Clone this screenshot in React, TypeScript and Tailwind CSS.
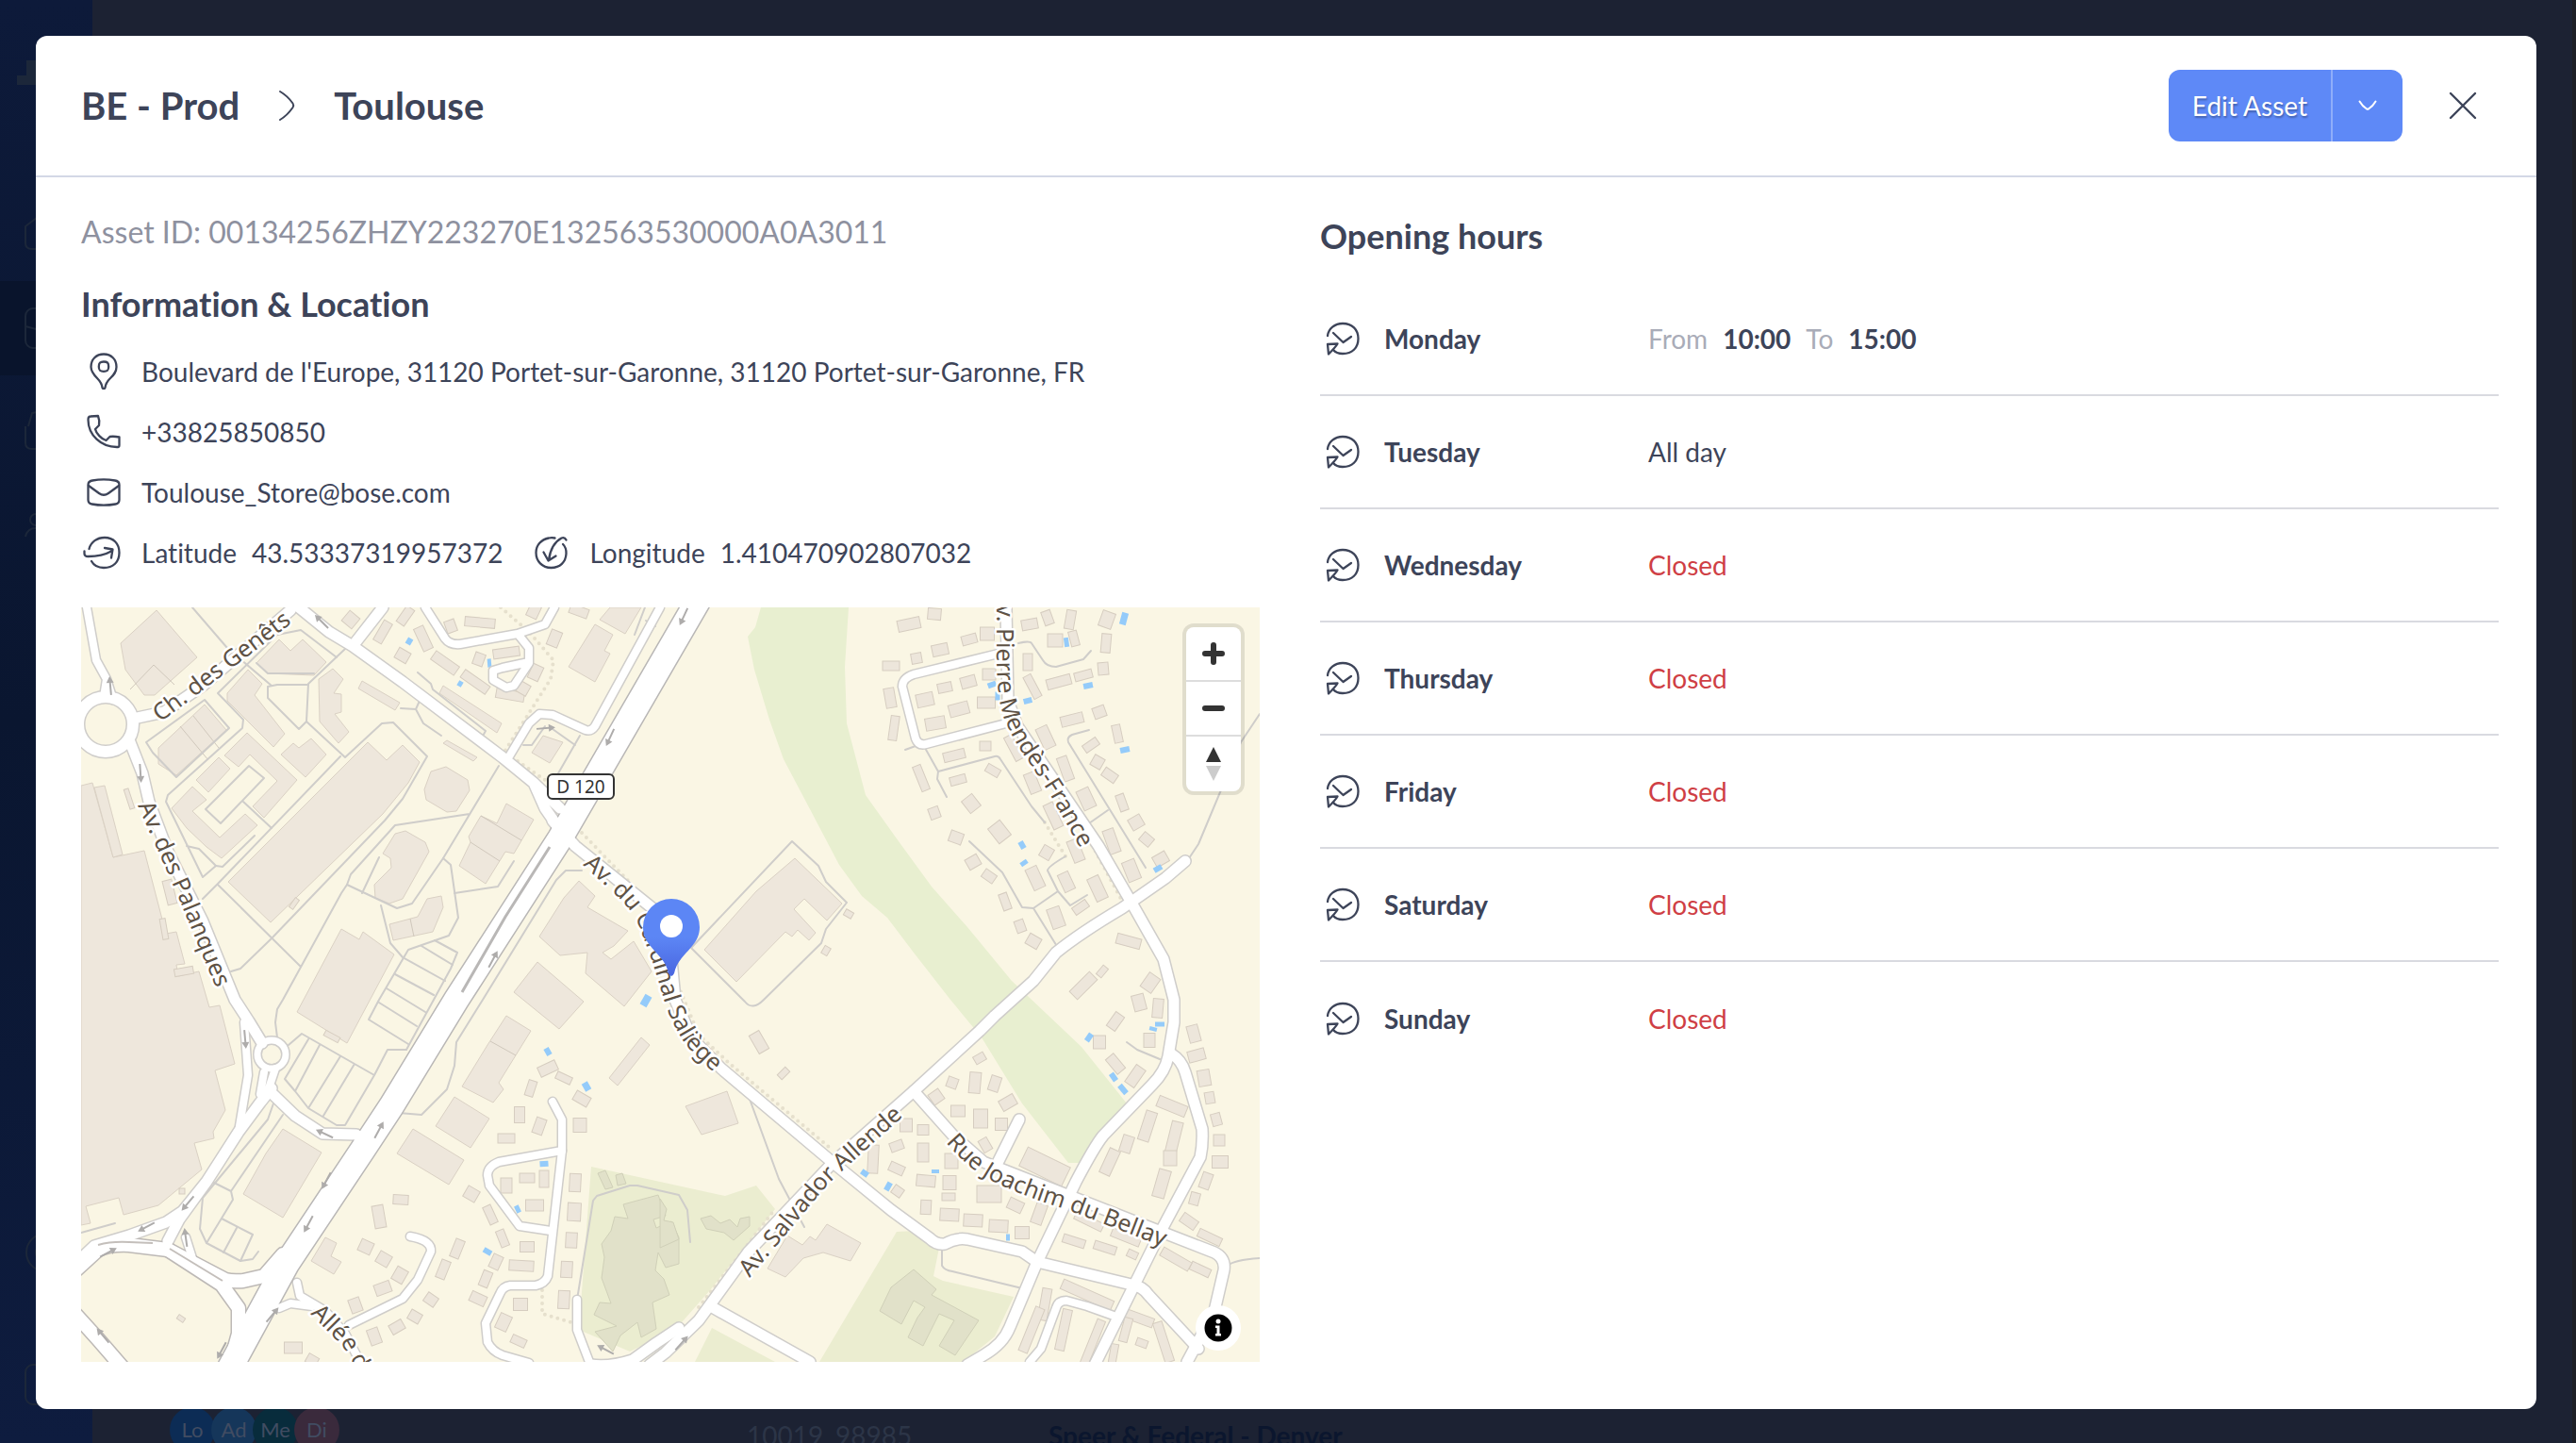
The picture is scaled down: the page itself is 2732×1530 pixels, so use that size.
import type { ReactNode } from 'react'

type Block = [x: number, y: number, w: number, h: number, angle?: number]

const openingHours = [
  { day: 'Monday', from: '10:00', to: '15:00' },
  { day: 'Tuesday', allDay: true },
  { day: 'Wednesday' },
  { day: 'Thursday' },
  { day: 'Friday' },
  { day: 'Saturday' },
  { day: 'Sunday' },
]

const avatars = [
  { initials: 'Lo', color: 'bg-[#0c2c55]' },
  { initials: 'Ad', color: 'bg-[#15365a]' },
  { initials: 'Me', color: 'bg-[#082c3c]' },
  { initials: 'Di', color: 'bg-[#3a2a3c]' },
]

const parks = [
  'M721 0L715 21L707 31L714 66L730 119L745 161L773 214L804 273L828 306L855 329L883 366L922 416L955 456L998 526L1047 589H1058L1109 526L1061 466L987 396L940 339L902 296L867 248L832 199L812 123L810 63L814 0Z',
]

const campuses = [
  'M541 593L614 609L683 624L716 613L736 638L667 724L630 766L582 789L528 766Z',
  'M865 662L885 661L910 679L904 709L914 714L989 731L969 773L936 800H783Z',
  'M669 764L736 800H651Z',
]

const campusBuildings = [
  'M575 633L612 623L620 645L607 649L610 658L626 651L634 668V696L620 700L612 684L609 703L618 712L624 729L606 737L610 765L594 774L590 758L572 772L564 789L545 768L568 762L544 750L550 737L562 738L552 711L555 689L552 675L562 661L566 646L580 648Z',
  'M548 600L556 597L564 615L556 617Z',
  'M567 602L574 600L578 611L569 613Z',
  'M614 627L621 638L618 650L628 652L634 670L614 679Z',
  'M657 648L668 645L678 653L688 649L696 657L699 648L709 646L709 656L692 671L682 663L663 659Z',
  'M883 702L907 723L902 729L952 756L927 793L910 783L926 756L910 749L893 783L877 774L887 753L895 742L883 735L870 760L847 746L859 721Z',
]

const buildings = [
  'M0 189L12 186L34 265L67 258L90 346L101 344L110 378L101 379L103 391L125 386L136 424L147 422L163 484L142 491L153 533L140 556L141 563L120 568L128 596L82 634L45 644L40 626L5 635L10 653L0 655Z',
  'M14 191L25 189L44 262L34 265Z',
  'M304 143L324 162L341 146L359 164L347 186L320 219L201 334L156 291Z',
  'M80 3L123 53L78 93L67 93L47 66L42 38Z',
  'M210 34L222 46L235 34L260 58L247 72L198 70L186 59Z',
  'M177 66L192 81L184 93L216 134L204 148L155 99V91Z',
  'M267 65L278 76L268 91L276 92V111L269 113L284 132L273 144L253 121L252 76Z',
  'M131 103L154 130L101 178L82 166V149Z',
  'M298 78L338 101L333 109L294 86Z',
  'M176 133L229 183L194 223L182 211L208 184L179 156L167 169L152 157Z',
  'M146 159L158 171L135 196L122 183Z',
  'M118 190L133 204L118 216L147 244L174 219L187 231L149 266L133 254L112 234L96 213Z',
  'M244 139L260 156L238 180L212 156L225 144L231 149Z',
  'M387 169L410 183L412 194L398 216L388 217L366 204L364 193L371 174Z',
  'M344 237L365 249L369 259L341 309L327 314L312 308L311 294L329 276L328 266L320 261L333 240Z',
  'M451 208L480 225L459 261L450 259L429 293L401 274L413 249L411 243L424 221L441 229Z',
  'M382 306L384 318L373 344L331 353L327 336L357 328L367 309Z',
  'M276 341L295 352L299 344L332 368L282 462L229 429Z',
  'M384 83L446 123L441 133L380 91Z',
  'M388 141L420 159L416 163L384 144Z',
  'M490 136L511 143L497 165L478 154Z',
  'M545 18L564 29L555 46L561 49L545 79L517 63Z',
  'M561 0H594L577 28L550 13Z',
  'M528 290L545 306L537 318L580 343L565 359L553 366L562 373L586 354L605 386L576 423L535 388L537 366L508 369L486 349L512 308Z',
  'M484 376L533 418L507 447L459 408Z',
  'M451 433L477 449L443 504L448 511L437 525L404 508L431 464Z',
  'M396 519L433 542L413 573L376 550Z',
  'M352 553L406 586L390 612L335 579Z',
  'M214 553L255 578L214 647L172 622L196 579Z',
  'M259 668L271 674L265 688L276 694L268 707L244 693Z',
  'M594 456L603 464L569 507L560 499Z',
  'M757 266L807 314L791 332L767 309L756 320L779 345L772 353L760 342L754 349L747 344L695 397L661 363L716 301Z',
  'M641 529L685 513L697 547L658 559Z',
  'M791 654L827 674L816 693L787 684L766 690L747 710L728 701L749 666L765 676L773 667L779 671Z',
]

const houses: Block[] = [
  [878, 18, 24, 12, -12], [905, 7, 14, 12, 5], [859, 62, 18, 10], [886, 54, 11, 11, -10], [911, 45, 17, 12, -12],
  [942, 34, 16, 10, -15], [961, 28, 15, 14], [858, 96, 11, 21, -10], [895, 98, 18, 14, -12], [916, 85, 15, 10, -12],
  [941, 79, 16, 12, -15], [963, 71, 14, 12], [931, 108, 21, 13, -15], [906, 123, 21, 13, -10], [960, 101, 19, 12],
  [862, 128, 9, 26, 8], [926, 157, 23, 10, -14], [959, 147, 12, 10], [891, 181, 9, 28, -22], [930, 183, 17, 9, -15],
  [967, 173, 15, 9, 30], [944, 208, 14, 16, -38], [974, 238, 16, 20, -38], [905, 218, 11, 12, -20], [928, 244, 14, 12, 20],
  [946, 270, 14, 12, -30], [963, 285, 14, 10, 35], [980, 312, 9, 18, -20], [996, 338, 10, 13, -20], [1010, 354, 14, 12, 30],
  [1006, 18, 17, 11, -10], [1025, 11, 10, 15, -20], [1049, 13, 10, 20, 10], [1033, 35, 16, 14], [1088, 13, 14, 17, 20],
  [1053, 33, 9, 16, -15], [1087, 38, 10, 20, 5], [1004, 58, 10, 18], [1009, 84, 9, 26, -28], [1037, 79, 26, 11, -15],
  [1063, 72, 19, 9, -15], [1084, 65, 11, 13, -5], [1051, 119, 24, 11, -14], [1080, 111, 13, 12, -20], [1099, 134, 9, 19, -12],
  [1023, 138, 13, 24, -25], [989, 149, 9, 28, -28], [1071, 146, 17, 9, -35], [1078, 164, 12, 12, 30], [1091, 178, 16, 10, 35],
  [1044, 171, 11, 26, -20], [1009, 186, 12, 22, -22], [1066, 203, 14, 22, -25], [1031, 221, 11, 28, -25], [1104, 207, 9, 18, -20],
  [1119, 228, 14, 13, -30], [1130, 246, 13, 11, 40], [1093, 248, 12, 26, -20], [1055, 258, 12, 24, -22], [1024, 260, 12, 13, 30],
  [1114, 279, 14, 22, -22], [1145, 267, 15, 12, -30], [1012, 287, 13, 24, -25], [1045, 291, 12, 20, -25], [1078, 298, 13, 26, -25],
  [1060, 318, 17, 9, -35], [1034, 329, 14, 22, -20], [1111, 354, 26, 11, 15], [1134, 398, 14, 18, 35], [1063, 401, 12, 30, 45],
  [1083, 386, 12, 7, -50], [814, 325, 9, 7, 30], [790, 364, 7, 9, 30], [1122, 419, 13, 17, -15], [1142, 425, 11, 20, 5],
  [1097, 439, 11, 18, 35], [1080, 461, 13, 14], [1133, 459, 12, 15], [1180, 452, 12, 18, -15], [1183, 475, 18, 12, -15],
  [1097, 484, 11, 20, -40], [1118, 497, 12, 22, 35], [1191, 499, 13, 17, -10], [1197, 520, 10, 12, -10], [1204, 543, 10, 13, -15],
  [1207, 565, 12, 12], [1208, 588, 17, 13], [1193, 608, 11, 17, 20], [1181, 627, 10, 13, 15], [1175, 651, 18, 11, 35],
  [1197, 668, 26, 9, 25], [1187, 702, 22, 9, 25], [1161, 691, 34, 10, 30], [1157, 529, 32, 12, 22], [1131, 550, 12, 32, 18],
  [1109, 569, 12, 18, 18], [1091, 588, 12, 28, 25], [1159, 563, 12, 36, 14], [1155, 584, 14, 16], [1146, 611, 13, 30, 16],
  [1022, 593, 50, 22, 26], [924, 504, 11, 11, 20], [907, 519, 13, 13, -35], [948, 504, 12, 22, 5], [969, 505, 11, 16, 18],
  [953, 478, 12, 9, -30], [983, 525, 17, 12, -30], [930, 534, 15, 12], [954, 542, 15, 20], [976, 548, 13, 13],
  [959, 570, 10, 14, -30], [875, 549, 13, 14], [893, 554, 12, 11], [865, 571, 14, 10, -20], [840, 585, 11, 30, 3],
  [893, 578, 12, 20], [923, 587, 14, 16], [865, 595, 16, 10, 25], [896, 608, 20, 12, 5], [921, 610, 14, 15],
  [866, 619, 11, 10, 35], [963, 622, 26, 18], [920, 625, 14, 8], [896, 636, 11, 15, 3], [921, 644, 20, 13, 3],
  [946, 650, 20, 13, 3], [973, 656, 20, 13, 3], [998, 663, 15, 13], [991, 634, 16, 12, 25], [1016, 643, 12, 22, 20],
  [1069, 651, 32, 9, 26], [1108, 668, 32, 9, 22], [1053, 672, 24, 9, 18], [1086, 679, 24, 9, 18], [1115, 686, 11, 8, 25],
  [1067, 729, 58, 11, 24], [1022, 739, 10, 34, 10], [1008, 766, 10, 50, 22], [1042, 766, 10, 44, 12], [1073, 779, 9, 50, 22],
  [1120, 753, 36, 10, 20], [1108, 766, 9, 26, 15], [1148, 779, 10, 44, -18], [1125, 780, 12, 8, 20], [1095, 791, 8, 20, 10],
  [719, 461, 12, 22, -30], [745, 494, 12, 7, -45], [495, 489, 20, 11, -25], [512, 499, 17, 8, 25], [477, 510, 9, 17, 18],
  [465, 538, 11, 17], [486, 550, 11, 17, 20], [451, 563, 18, 10], [531, 521, 17, 11, 30], [529, 549, 14, 15],
  [414, 622, 14, 13, 30], [451, 613, 12, 16], [473, 605, 16, 10], [491, 606, 10, 18], [481, 634, 19, 12],
  [524, 610, 12, 19, 3], [523, 641, 14, 19, 3], [520, 671, 12, 16, 3], [515, 702, 12, 17, 3], [512, 734, 12, 19, 3],
  [466, 739, 15, 13], [448, 758, 13, 17, 25], [464, 778, 16, 9, 25], [434, 644, 9, 20, -25], [447, 669, 9, 18, -22],
  [440, 694, 11, 15, 25], [429, 712, 10, 17, 22], [421, 733, 17, 11, 25], [473, 678, 15, 11], [467, 698, 26, 11, 3],
  [339, 628, 16, 10, 3], [399, 680, 10, 20, 22], [384, 702, 10, 20, 22], [371, 734, 13, 11, 35], [354, 752, 13, 11, 30],
  [335, 763, 15, 11, -30], [311, 773, 12, 17, -20], [291, 740, 12, 15, -20], [338, 708, 13, 15, 30], [320, 722, 17, 12, -20],
  [321, 691, 14, 13, 30], [302, 678, 14, 13, 25], [225, 785, 19, 12], [245, 798, 12, 10, 30], [316, 646, 12, 24, -10],
  [286, 13, 14, 14, 40], [320, 26, 10, 24, 30], [344, 9, 10, 20, 35], [363, 33, 11, 26, -25], [341, 51, 14, 12, 30],
  [386, 59, 30, 11, 35], [423, 16, 32, 10, 5], [392, 20, 11, 13, -20], [451, 48, 28, 10, -8], [422, 55, 11, 13, 20],
  [418, 79, 32, 10, 35], [455, 93, 30, 10, 10], [482, 69, 12, 16, 25], [502, 33, 12, 17, 22], [528, 4, 20, 10, 20],
  [480, 4, 12, 14, 25], [469, 86, 12, 12, 30], [51, 203, 5, 22, -18], [94, 302, 10, 26, -14], [266, 455, 17, 6, 28],
  [226, 314, 5, 12, 35], [88, 341, 6, 22, -10], [109, 386, 20, 8, -10], [107, 619, 6, 6], [106, 754, 8, 5, 35],
]

const pools: Block[] = [
  [348, 36, 6, 7, 30], [433, 59, 4, 9, -5], [402, 81, 5, 6, 30], [599, 417, 8, 12, 30], [495, 471, 6, 8, -30],
  [536, 508, 7, 9, -30], [491, 590, 9, 6, -4], [463, 638, 5, 8, -25], [431, 683, 9, 6, 30], [1106, 12, 7, 13, 15],
  [1045, 37, 5, 10, -8], [966, 82, 9, 6, -20], [972, 94, 5, 9], [1004, 99, 9, 6, -15], [1068, 83, 10, 6, -12],
  [1107, 151, 10, 6, -12], [998, 252, 6, 8, -30], [1000, 271, 8, 5, -35], [1142, 277, 9, 6, -30], [1144, 442, 10, 5],
  [1137, 447, 8, 4, 15], [1069, 456, 6, 9, 35], [1095, 498, 6, 9, -35], [1105, 511, 6, 11, -40], [831, 600, 8, 6, 35],
  [856, 614, 6, 9, 30], [906, 598, 8, 4], [983, 668, 4, 7],
]

const lanes = [
  'M118 0L155 43L202 83',
  'M271 53L233 24L208 29L145 91L172 119L171 128L92 199L90 206L129 286L143 274L125 256L112 253',
  'M143 274L150 275L184 242',
  'M280 44L241 81L239 121L280 159L319 123L331 122L367 158L341 203L322 226L202 351L169 383L159 386',
  'M275 158L145 293L129 309M145 294L233 381',
  'M239 121L231 129L198 96V84L208 82H241',
  'M178 168L194 181L148 229L132 214ZM172 206L202 234',
  'M69 143L131 98L157 128L101 180L76 154Z',
  'M186 59L198 70H247',
  'M443 168L384 266L351 314L335 319L282 294L286 283L333 231L412 219M298 303L316 265',
  'M282 294L276 303L214 416L208 426L206 440L208 456',
  'M384 266L392 273L400 329L390 348L347 363L316 416L305 437L347 463',
  'M318 316L328 356L341 371L386 396M396 303L442 296L459 269',
  'M339 107L355 108L363 123L382 136M359 99L355 108',
  'M357 69L371 81L373 87L429 131L425 138',
  'M333 389L374 411M361 359L394 379M375 353L399 366L392 383L345 469M324 404L365 429M316 419L356 444',
  'M345 469H325L311 496L280 549H271L241 531L227 513L216 500L241 458M220 464L234 452L311 496M253 464L227 513M275 476L241 531M290 484L257 539',
  'M204 526L198 543L129 626L126 659L133 674L169 693L182 691L188 683',
  'M214 538L159 619L161 628L133 674M139 609L159 619M149 648L182 665L169 693M165 658L151 684',
  'M531 279H514L504 289L426 416L398 461L396 486L388 511L361 538L337 536',
  'M529 136L506 176M500 129L524 146M469 146H478L492 126',
  'M598 0L587 29M599 14L609 20',
  'M647 361L754 248L782 274L790 291L812 313L790 341L785 356L724 416Q712 428 704 418Z',
  'M874 151L885 147M895 149L909 174L969 158Q973 157 975 161L1008 211L1022 228M909 174L908 182L918 201',
  'M994 38Q1006 35 1008 38L1020 56Q1024 63 1034 63L1063 55L1071 46',
  'M1069 130L1051 135Q1045 138 1047 143L1129 276M1089 215L1069 229',
  'M942 248L977 281L998 318L1010 319L1036 361M1010 319L1036 301L1025 279Q1025 275 1044 264M1036 301L1049 316L1067 305',
  'M1175 266L1185 251L1208 196L1230 143L1250 113',
  'M706 513L740 606L767 657M1109 461L1120 469L1144 479',
  'M913 679V698Q916 703 924 704L998 722M1216 698Q1222 692 1250 690',
  'M526 734L543 629L547 624L582 613H590L634 623L643 639L646 673',
  'M0 663L36 653',
]

const footpaths = [
  'M445 0L475 26L501 56L498 76L449 153',
  'M463 163L492 183',
  'M531 239L586 296L612 330L634 403L655 453L687 483L794 573',
  'M489 724V749L520 758',
  'M1069 246L1104 311',
  'M1022 228L1044 264',
  'M655 742L736 638',
]

const smallRoads = [
  'M365 0L386 33Q391 40 402 39L463 28L492 18L502 0M463 28L475 43V59L459 83L451 85L437 77V67L447 64L475 58',
  'M614 0L545 126Q541 132 535 130L500 114L486 113L475 123L451 163',
  'M6 0L16 56L27 76L24 95M27 76L34 98',
  'M173 440L177 496L167 556M194 493L190 516M206 489L198 513',
  'M284 761L341 733L357 713L371 683Q372 671 349 667',
  'M500 524L510 543V576L495 709Q492 717 482 719L455 719Q447 720 444 728L429 759L431 779Q436 789 447 793L475 801',
  'M510 576L443 588Q431 593 431 602L433 613L465 656L498 661',
  'M526 734V766L539 800',
  'M977 48L883 71Q871 75 871 84L885 139Q888 147 896 145L981 123',
  'M1095 751L1067 741L1045 735Q1036 735 1034 743L1018 786L1006 800',
  'M229 716L232 730L259 746L280 770L296 800M210 743L222 738L245 741M111 668L118 690',
]

const roads = [
  'M55 118L88 111L129 83L222 3L226 -4',
  'M231 0L263 26L288 41L341 79L447 159L480 186L492 213L508 236M480 186L508 213M320 0L288 41',
  'M52 143L65 176L72 206L92 259L129 333L163 416L178 439L192 462',
  'M202 510L190 525L167 556L133 609L104 649L92 672M133 609L108 640L90 652L51 666L14 677L-6 696',
  'M200 513L227 539L256 558L292 559',
  'M671 743L773 800',
  'M500 226L524 253L565 286L606 319L626 373L630 416L647 456L679 489L794 586L859 639L900 669Q907 676 916 675Q928 668 940 670L998 683L1014 694L1114 718Q1126 720 1132 729L1185 786',
  'M883 513L924 559L957 588L1046 623L1148 663L1202 684Q1214 690 1212 703L1202 746L1173 800',
  'M995 543L971 591',
  'M981 0L983 99L993 126L1079 253L1114 313L1148 373L1159 416V440L1153 476Q1150 492 1136 506L1084 560Q1075 571 1055 609L1014 694L985 763Q978 781 957 793L940 803',
  'M1157 474Q1167 480 1171 493L1189 553Q1190 569 1187 583L1148 656L1075 803',
  'M603 803L620 790L655 756L708 683L798 588L883 513L953 449L969 433L1010 396L1034 366Q1060 345 1104 319L1150 287L1171 269',
  'M540 803Q560 806 585 798L610 780L634 764',
]

const highways = [
  'M-6 703L18 681Q30 675 51 676L92 681L153 713Q160 715 172 714L194 709L214 686',
  'M92 681L149 718L167 743V770L157 806',
  'M-10 745L18 776L44 806',
]

const arrows: [number, number, number][] = [
  [31, 83, -95], [63, 176, 86], [255, 15, 225], [493, 128, -5], [561, 138, 115], [437, 373, -62], [174, 458, 85],
  [258, 558, 205], [316, 554, -62], [260, 608, 118], [241, 654, 118], [113, 632, 130], [69, 657, 152], [29, 684, -28],
  [111, 668, -98], [203, 750, -50], [23, 772, 230], [149, 788, 118], [556, 787, 208], [637, 780, -48], [639, 10, 115],
]

const streets = [
  { id: 'genets', name: 'Ch. des Genêts', d: 'M84 122L240 4' },
  { id: 'palanques', name: 'Av. des Palanques', d: 'M60 210L81 257L100 300L150 420' },
  { id: 'saliege', name: 'Av. du Cardinal Saliège', d: 'M532 273L565 303Q584 320 592 338L606 376L617 412Q624 437 640 462Q650 475 690 510' },
  { id: 'mendes', name: 'Av. Pierre Mendès-France', d: 'M971 -19V50Q971 98 980 120Q990 144 1008 168L1026 196L1076 284' },
  { id: 'allende', name: 'Av. Salvador Allende', d: 'M709 711L790 614L808 597L896 518' },
  { id: 'bellay', name: 'Rue Joachim du Bellay', d: 'M917 567Q940 594 962 606Q1000 625 1044 638L1166 685' },
  { id: 'allee', name: 'Allée d', d: 'M243 749L278 784L310 840' },
]

function Blocks({ items, className }: { items: Block[]; className: string }) {
  return (
    <g className={className}>
      {items.map(([x, y, w, h, angle = 0]) => (
        <rect
          key={`${x}-${y}`}
          x={x - w / 2}
          y={y - h / 2}
          width={w}
          height={h}
          transform={`rotate(${angle} ${x} ${y})`}
        />
      ))}
    </g>
  )
}

function Lines({ items, stroke, width }: { items: string[]; stroke: string; width: number }) {
  return (
    <g fill="none" stroke={stroke} strokeWidth={width} strokeLinecap="round" strokeLinejoin="round">
      {items.map((d) => (
        <path key={d} d={d} />
      ))}
    </g>
  )
}

function StreetMap() {
  return (
    <svg
      className="block h-full w-full bg-[#faf6e4]"
      viewBox="0 0 1250 800"
      preserveAspectRatio="xMidYMid slice"
      role="img"
      aria-label="Map"
    >
      <defs>
        <linearGradient id="pin" x1="0" y1="0" x2="0" y2="1">
          <stop offset="0.5" stopColor="#5c86f5" />
          <stop offset="1" stopColor="#4a66e0" />
        </linearGradient>
        {streets.map((s) => (
          <path key={s.id} id={s.id} d={s.d} />
        ))}
      </defs>

      <path d={parks[0]} fill="#e8efd0" />
      <g fill="#ebedd0">
        {campuses.map((d) => (
          <path key={d} d={d} />
        ))}
      </g>
      <g fill="#e1e1c9" stroke="#d0d0b8">
        {campusBuildings.map((d) => (
          <path key={d} d={d} />
        ))}
      </g>
      <g fill="#eee7dc" stroke="#dad1c4">
        {buildings.map((d) => (
          <path key={d} d={d} />
        ))}
      </g>
      <path
        d="M52 87L77 61L99 82M105 126L135 162M119 115L146 149M413 249L444 269M424 221L467 247M349 330L353 349M434 460L461 475"
        fill="none"
        stroke="#d0c8bc"
      />
      <Blocks items={houses} className="fill-[#ede6db] stroke-[#d6cdc0]" />
      <Blocks items={pools} className="fill-[#94cbfa]" />

      <g fill="none" stroke="#e6e0cd" strokeWidth="4" strokeDasharray="0 7" strokeLinecap="round">
        {footpaths.map((d) => (
          <path key={d} d={d} />
        ))}
      </g>
      <Lines items={lanes} stroke="#cfcdca" width={2} />

      {/* casings first so that junctions stay open */}
      <Lines items={smallRoads} stroke="#cfcdca" width={11} />
      <Lines items={roads} stroke="#cfcdca" width={14} />
      <Lines items={highways} stroke="#bdb9b6" width={17} />
      <path d="M656 -10L508 245L398 416L329 529L298 576L218 696L157 808" fill="none" stroke="#b9b7b6" strokeWidth="29" />
      <g fill="none" stroke="#cfcdca">
        <circle cx="26" cy="124" r="29" strokeWidth="15" />
        <circle cx="202" cy="474" r="15" strokeWidth="10" />
      </g>
      <Lines items={smallRoads} stroke="#fff" width={8} />
      <Lines items={roads} stroke="#fff" width={11} />
      <Lines items={highways} stroke="#fff" width={14} />
      <path d="M656 -10L508 245L398 416L329 529L298 576L218 696L157 808" fill="none" stroke="#fff" strokeWidth="26" />
      <g fill="none" stroke="#fff">
        <circle cx="26" cy="124" r="29" strokeWidth="12" />
        <circle cx="202" cy="474" r="15" strokeWidth="7" />
      </g>
      <path d="M497 254L450 328L404 408" fill="none" stroke="#b9b7b6" strokeWidth="3" />
      <path d="M18 676Q32 672 51 673L76 674M94 680L150 714" fill="none" stroke="#c4bfbb" strokeWidth="2" />

      <g fill="none" stroke="#aeacab" strokeWidth="2">
        {arrows.map(([x, y, angle]) => (
          <g key={`${x}-${y}`} transform={`translate(${x} ${y}) rotate(${angle})`}>
            <path d="M-10 0H6" />
            <path d="M3 -4L10 0L3 4Z" fill="#aeacab" stroke="none" />
          </g>
        ))}
      </g>

      <g
        className="[font-family:'Noto_Sans',sans-serif]"
        fontSize="25"
        fill="#5e5245"
        stroke="#fff"
        strokeWidth="5"
        strokeLinejoin="round"
        paintOrder="stroke"
      >
        {streets.map((s) => (
          <text key={s.id}>
            <textPath href={`#${s.id}`}>{s.name}</textPath>
          </text>
        ))}
      </g>

      <rect x="495" y="177" width="70" height="26" rx="5" fill="#fff" stroke="#333" strokeWidth="2" />
      <text
        x="530"
        y="197"
        textAnchor="middle"
        fontSize="19"
        fill="#333"
        className="[font-family:'Noto_Sans',sans-serif]"
      >
        D 120
      </text>

      <path
        d="M626 309A30 30 0 0 0 596 339C596 361 619 367 623 388Q626 394 629 388C633 367 656 361 656 339A30 30 0 0 0 626 309Z"
        fill="url(#pin)"
      />
      <circle cx="626" cy="338" r="12" fill="#fff" />
    </svg>
  )
}

function MapControls() {
  const button = 'flex h-[58px] w-[58px] items-center justify-center'
  return (
    <div className="absolute top-[21px] right-5 divide-y-2 divide-[#ddd] rounded-lg bg-white ring-4 ring-black/10">
      <button type="button" aria-label="Zoom in" className={button}>
        <svg className="h-6 w-6" viewBox="0 0 24 24" stroke="#333" strokeWidth="6" strokeLinecap="round">
          <path d="M3 12h18M12 3v18" />
        </svg>
      </button>
      <button type="button" aria-label="Zoom out" className={button}>
        <svg className="h-6 w-6" viewBox="0 0 24 24" stroke="#333" strokeWidth="6" strokeLinecap="round">
          <path d="M3 12h18" />
        </svg>
      </button>
      <button type="button" aria-label="Reset bearing to north" className={button}>
        <svg className="h-9 w-4" viewBox="0 0 16 36">
          <path d="M0 16L8 0L16 16Z" fill="#333" />
          <path d="M0 20L8 36L16 20Z" fill="#ccc" />
        </svg>
      </button>
    </div>
  )
}

function Icon({ children }: { children: ReactNode }) {
  return (
    <svg
      className="h-12 w-12 shrink-0"
      viewBox="0 0 48 48"
      fill="none"
      stroke="currentColor"
      strokeWidth="2.300"
      strokeLinecap="round"
      strokeLinejoin="round"
    >
      {children}
    </svg>
  )
}

function PinIcon() {
  return (
    <Icon>
      <path d="M24 5.500C16 5.500 10.500 11 10.500 19C10.500 24 14 28 17.500 31.500C21 35 22 37 22.500 41C22.700 42.500 25.300 42.500 25.500 41C26 37 27 35 30.500 31.500C34 28 37.500 25 37.500 19C37.500 11 32 5.500 24 5.500Z" />
      <path d="M24 13.500C20 13.500 18.800 14.800 18.800 18.700C18.800 22.600 20 23.800 24 23.800C28 23.800 29.200 22.600 29.200 18.700C29.200 14.800 28 13.500 24 13.500Z" />
    </Icon>
  )
}

function PhoneIcon() {
  return (
    <Icon>
      <path d="M10 7.500L18 7C19 9.500 19.500 14 19 17L15 21C16 25.500 21.500 31.500 26.500 33L30.500 29C33.500 28.500 38 29 40.500 29.500V38C40.500 39 40 40 39 40C21 40.500 7.500 27 7.500 11C7.500 9 8.500 7.500 10 7.500Z" />
    </Icon>
  )
}

function MailIcon() {
  return (
    <Icon>
      <path d="M12 11.500C20 10 28 10 36 11.500C39 12 40.500 13.500 40.500 16V32C40.500 34.500 39 36 36.500 36.500C28.500 38 19.500 38 11.500 36.500C9 36 7.500 34.500 7.500 32V16C7.500 13.500 9 12 12 11.500Z" />
      <path d="M8 17L19 25C22.500 27.500 25.500 27.500 29 25L40 17" />
    </Icon>
  )
}

function LatitudeIcon() {
  return (
    <Icon>
      <path d="M8.500 20C10.500 12.500 17 8 25 8C34 8 40.500 14 40.500 24C40.500 34 34 40 24 40C18.500 40 13.500 37.500 11 33" />
      <path d="M3.500 22.500V25C3.500 27 5 28 7.500 28C17 28 25 26.500 32 22.500M25 19L33.500 20.500L32 29.500" />
    </Icon>
  )
}

function LongitudeIcon() {
  return (
    <Icon>
      <path d="M27.500 8.500C25 8 23 8 21 8.500C13 10 7.500 16 7.500 24C7.500 33 14 40 23.500 40C33 40 39 34 39.500 25C39.700 21 38.500 17.500 36 15" />
      <path d="M39.500 10.500C38.500 8.500 37 7.500 34.500 8.500C28 12 22.500 20.500 21 32M15.500 23.500L20.500 32.500L28.500 27.500" />
    </Icon>
  )
}

function HoursIcon() {
  return (
    <Icon>
      <path d="M8 21C9 13.500 15.500 8 24 8C34 8 40.500 14.500 40.500 24C40.500 34 34 40 24 40C20 40 16.500 39 14 36" />
      <path d="M8 30L18.500 29.500C16.500 33 12 37.500 9 40.500L8 30Z" />
      <path d="M14 18L24.500 28L33 22" />
    </Icon>
  )
}

function ContactRow({ icon, children }: { icon: ReactNode; children: ReactNode }) {
  return (
    <li className="flex h-16 items-center gap-4">
      {icon}
      {children}
    </li>
  )
}

function NavIcon({ children }: { children: ReactNode }) {
  return (
    <svg className="h-11 w-11 shrink-0" viewBox="0 0 44 44" fill="none" stroke="currentColor" strokeWidth="2">
      {children}
    </svg>
  )
}

function DimmedPage() {
  return (
    <div aria-hidden="true" className="absolute inset-0 flex overflow-hidden bg-[#1c2233]">
      <div className="flex w-[98px] shrink-0 flex-col bg-linear-to-b from-[#0d1a3a] via-[#0a1630] to-[#0e1c3f] pt-16 pb-10 text-[#1c273a] *:px-[26px]">
        <div>
          <svg className="-ml-2 h-7 w-14" viewBox="0 0 56 28" fill="currentColor">
            <path d="M0 16H10V0H22V26H0Z" />
          </svg>
        </div>
        <div className="mt-[130px]">
          <NavIcon>
            <path d="M1 18L22 2L43 18V36Q43 42 36 42H8Q1 42 1 36Z" />
          </NavIcon>
        </div>
        <div className="mt-8 flex h-[100px] items-center bg-[#09142c]">
          <NavIcon>
            <rect x="1" y="1" width="42" height="42" rx="8" />
            <path d="M1 20L16 24H43" />
          </NavIcon>
        </div>
        <div className="mt-9">
          <NavIcon>
            <path d="M4 18L8 4Q22 0 36 4L40 18V36Q40 42 34 42H8Q1 42 1 36V18" />
          </NavIcon>
        </div>
        <div className="mt-16">
          <NavIcon>
            <circle cx="12" cy="9" r="6" />
            <path d="M1 27Q3 18 12 18" />
          </NavIcon>
        </div>
        <div className="mt-auto">
          <NavIcon>
            <circle cx="22" cy="22" r="20" />
            <circle cx="22" cy="22" r="10" />
          </NavIcon>
        </div>
        <div className="mt-24">
          <NavIcon>
            <rect x="1" y="1" width="42" height="42" rx="8" />
          </NavIcon>
        </div>
      </div>
      <div className="flex min-w-0 flex-1 items-end border-r-4 border-[#1d1f26] text-[28px] leading-8 text-[#2c3547]">
        <div className="flex h-[38px] w-[694px] shrink-0 items-start pl-[82px] text-[#414c62]">
          {avatars.map((a) => (
            <span
              key={a.initials}
              className={`-mr-1 flex h-12 w-12 shrink-0 items-center justify-center rounded-full text-[22px] ${a.color}`}
            >
              {a.initials}
            </span>
          ))}
        </div>
        <div className="h-6 w-[320px] shrink-0">10019_98985</div>
        <div className="h-6 font-bold text-[#0b162e]">Speer &amp; Federal - Denver</div>
      </div>
    </div>
  )
}

export default function App() {
  return (
    <div className="relative flex h-screen flex-col pt-[38px] pr-[42px] pb-9 pl-[38px] text-[28px] leading-10 text-[#3d4459] [font-family:Lato,sans-serif] [font-variant-ligatures:none]">
      <DimmedPage />
      <div
        role="dialog"
        aria-labelledby="asset-title"
        className="relative flex min-h-0 flex-1 flex-col rounded-xl bg-white"
      >
        <header className="flex h-[150px] shrink-0 items-center justify-between border-b-2 border-[#d3d8e6] pr-[62px] pl-12">
          <h1 id="asset-title" className="flex items-center text-[40px] leading-12 font-bold">
            <span>BE - Prod</span>
            <svg
              className="mx-[34px] h-9 w-8"
              viewBox="0 0 32 36"
              fill="none"
              stroke="currentColor"
              strokeWidth="2"
              strokeLinecap="round"
            >
              <path d="M9 3C14 6 19 10.500 22.500 15.500C23.500 17 23.500 18.500 22.500 20C19 25 14 30 9 33" />
            </svg>
            <span>Toulouse</span>
          </h1>
          <div className="flex items-center gap-12">
            <div className="flex h-[76px] overflow-hidden rounded-xl bg-[#5e89f7] text-white">
              <button type="button" className="px-[25px] [text-shadow:1px_2px_2px_rgba(0,0,0,0.3)]">
                Edit Asset
              </button>
              <button
                type="button"
                aria-label="More actions"
                className="flex w-[76px] items-center justify-center border-l-2 border-[#8fadfa]"
              >
                <svg className="h-5 w-5" viewBox="0 0 20 20" fill="none" stroke="currentColor" strokeWidth="2" strokeLinecap="round">
                  <path d="M1.500 5.500C3.500 9 6 11.500 9 13.500Q10 14 11 13.500C14 11.500 16.500 9 18.500 5.500" />
                </svg>
              </button>
            </div>
            <button type="button" aria-label="Close">
              <svg className="h-8 w-8" viewBox="0 0 32 32" stroke="currentColor" strokeWidth="2.400" strokeLinecap="round">
                <path d="M3 3L29 29M29 3L3 29" />
              </svg>
            </button>
          </div>
        </header>

        <div className="grid min-h-0 flex-1 grid-cols-2 gap-16 pr-10 pb-[50px] pl-12">
          <section className="flex min-h-0 flex-col pt-[38px]">
            <p className="text-[32px] text-[#8e919f]">Asset ID: 00134256ZHZY223270E132563530000A0A3011</p>
            <h2 className="mt-9 text-[36px] font-bold">Information &amp; Location</h2>
            <ul className="mt-5">
              <ContactRow icon={<PinIcon />}>
                Boulevard de l&apos;Europe, 31120 Portet-sur-Garonne, 31120 Portet-sur-Garonne, FR
              </ContactRow>
              <ContactRow icon={<PhoneIcon />}>+33825850850</ContactRow>
              <ContactRow icon={<MailIcon />}>Toulouse_Store@bose.com</ContactRow>
              <li className="flex h-16 items-center gap-4">
                <LatitudeIcon />
                <span>Latitude</span>
                <span>43.53337319957372</span>
                <span className="ml-3 flex">
                  <LongitudeIcon />
                </span>
                <span>Longitude</span>
                <span>1.410470902807032</span>
              </li>
            </ul>
            <div className="relative mt-[26px] min-h-0 flex-1 overflow-hidden">
              <StreetMap />
              <MapControls />
              <button
                type="button"
                aria-label="Toggle attribution"
                className="absolute right-5 bottom-3 flex h-12 w-12 items-center justify-center rounded-full bg-white"
              >
                <svg className="h-[30px] w-[30px]" viewBox="0 0 30 30">
                  <circle cx="15" cy="15" r="14.500" />
                  <circle cx="15" cy="8" r="2.500" fill="#fff" />
                  <path d="M12 12.500H16.500V21H18V23.500H12V21H13.500V15H12Z" fill="#fff" />
                </svg>
              </button>
            </div>
          </section>

          <section className="pt-[42px]">
            <h2 className="text-[36px] font-bold">Opening hours</h2>
            <ul className="mt-[30px]">
              {openingHours.map((row) => (
                <li
                  key={row.day}
                  className="flex h-[120px] items-center gap-5 border-b-2 border-[#d9dae0] last:border-b-0"
                >
                  <HoursIcon />
                  <span className="w-[260px] shrink-0 font-bold">{row.day}</span>
                  {row.from ? (
                    <span className="flex gap-4">
                      <span className="text-[#a9acb8]">From</span>
                      <b>{row.from}</b>
                      <span className="text-[#a9acb8]">To</span>
                      <b>{row.to}</b>
                    </span>
                  ) : row.allDay ? (
                    <span>All day</span>
                  ) : (
                    <span className="text-[#cf3f45]">Closed</span>
                  )}
                </li>
              ))}
            </ul>
          </section>
        </div>
      </div>
    </div>
  )
}
